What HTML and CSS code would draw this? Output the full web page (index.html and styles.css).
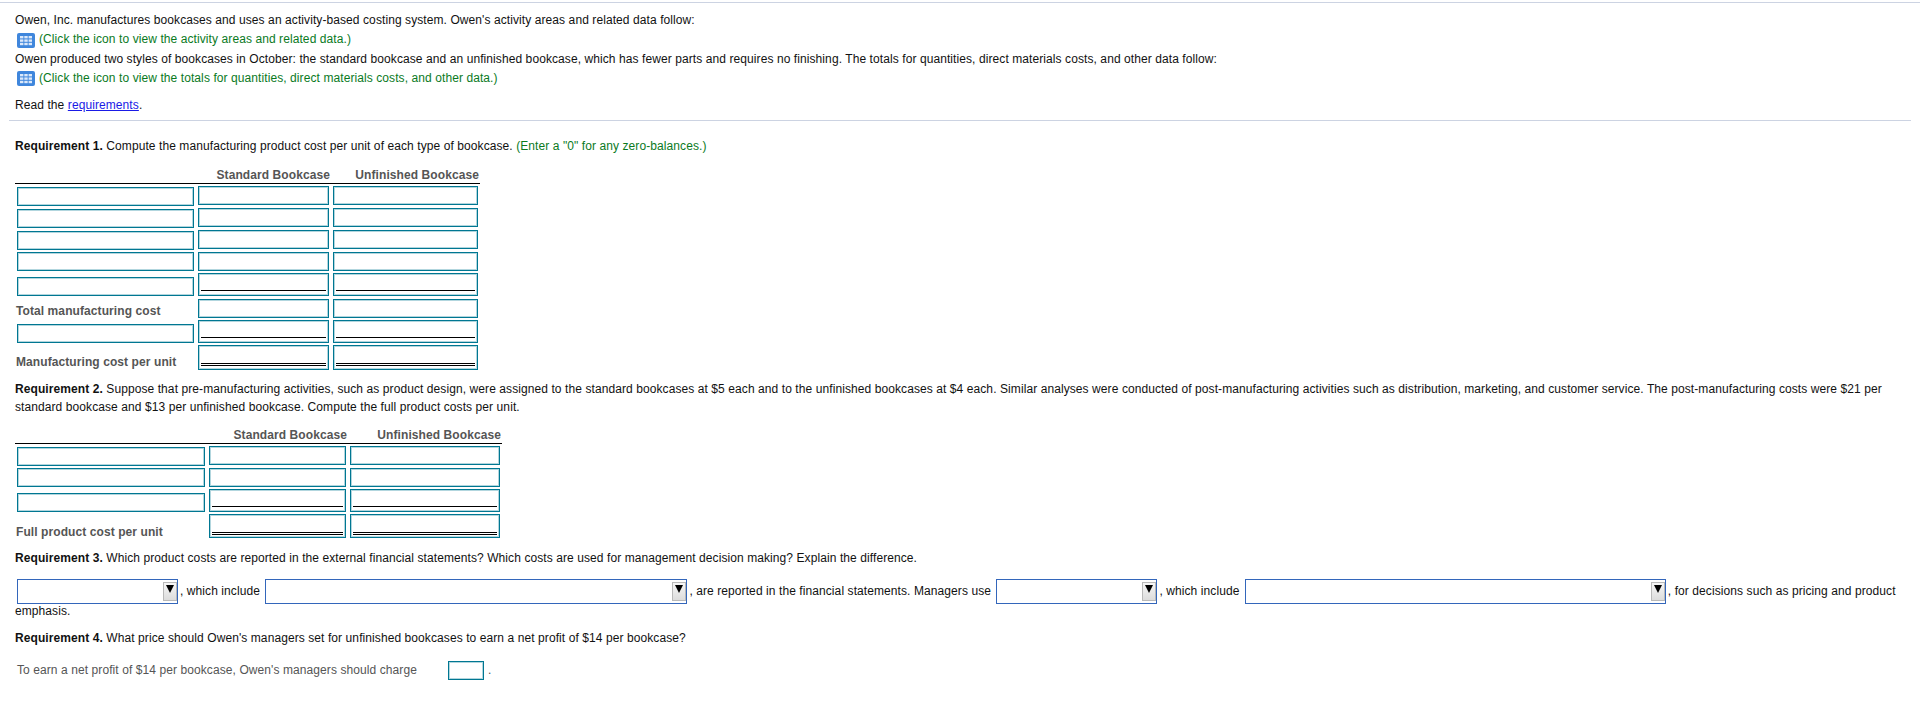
FILE: index.html
```html
<!DOCTYPE html>
<html lang="en">
<head>
<meta charset="utf-8">
<title>Owen, Inc. activity-based costing</title>
<link rel="stylesheet" href="styles.css">
</head>
<body>
<div class="top-rule"></div>
<section class="intro">
  <p class="line">Owen, Inc. manufactures bookcases and uses an activity-based costing system. Owen's activity areas and related data follow:</p>
  <p class="line note"><svg class="grid-icon" viewBox="0 0 18 15"><rect width="18" height="15" rx="2" fill="#3f86dc"/><g fill="#dbe8fa"><rect x="3" y="3" width="3.4" height="2.4"/><rect x="7.3" y="3" width="3.4" height="2.4"/><rect x="11.6" y="3" width="3.4" height="2.4"/><rect x="3" y="6.4" width="3.4" height="2.4"/><rect x="7.3" y="6.4" width="3.4" height="2.4"/><rect x="11.6" y="6.4" width="3.4" height="2.4"/><rect x="3" y="9.8" width="3.4" height="2.4"/><rect x="7.3" y="9.8" width="3.4" height="2.4"/><rect x="11.6" y="9.8" width="3.4" height="2.4"/></g></svg>(Click the icon to view the activity areas and related data.)</p>
  <p class="line">Owen produced two styles of bookcases in October: the standard bookcase and an unfinished bookcase, which has fewer parts and requires no finishing. The totals for quantities, direct materials costs, and other data follow:</p>
  <p class="line note"><svg class="grid-icon" viewBox="0 0 18 15"><rect width="18" height="15" rx="2" fill="#3f86dc"/><g fill="#dbe8fa"><rect x="3" y="3" width="3.4" height="2.4"/><rect x="7.3" y="3" width="3.4" height="2.4"/><rect x="11.6" y="3" width="3.4" height="2.4"/><rect x="3" y="6.4" width="3.4" height="2.4"/><rect x="7.3" y="6.4" width="3.4" height="2.4"/><rect x="11.6" y="6.4" width="3.4" height="2.4"/><rect x="3" y="9.8" width="3.4" height="2.4"/><rect x="7.3" y="9.8" width="3.4" height="2.4"/><rect x="11.6" y="9.8" width="3.4" height="2.4"/></g></svg>(Click the icon to view the totals for quantities, direct materials costs, and other data.)</p>
  <p class="line read">Read the <a href="#req">requirements</a>.</p>
</section>
<hr class="rule">
<main class="content">
  <p class="req req1"><b>Requirement 1.</b> Compute the manufacturing product cost per unit of each type of bookcase. <span class="hint">(Enter a "0" for any zero-balances.)</span></p>

  <div class="sheet sheet1">
    <div class="head first">Standard Bookcase</div><div class="head second">Unfinished Bookcase</div>
    <div class="cell label"><input class="field"></div><div class="cell"><input class="field"></div><div class="cell"><input class="field"></div>
    <div class="cell label"><input class="field"></div><div class="cell"><input class="field"></div><div class="cell"><input class="field"></div>
    <div class="cell label"><input class="field"></div><div class="cell"><input class="field"></div><div class="cell"><input class="field"></div>
    <div class="cell label"><input class="field"></div><div class="cell"><input class="field"></div><div class="cell"><input class="field"></div>
    <div class="cell label raised"><input class="field"></div><div class="cell"><div class="ruled single"></div></div><div class="cell"><div class="ruled single"></div></div>
    <div class="cell label"><span class="caption total">Total manufacturing cost</span></div><div class="cell"><input class="field"></div><div class="cell"><input class="field"></div>
    <div class="cell label"><input class="field"></div><div class="cell"><div class="ruled single"></div></div><div class="cell"><div class="ruled single"></div></div>
    <div class="cell label"><span class="caption">Manufacturing cost per unit</span></div><div class="cell"><div class="ruled double"></div></div><div class="cell"><div class="ruled double"></div></div>
  </div>

  <p class="req req2"><b>Requirement 2.</b> Suppose that pre-manufacturing activities, such as product design, were assigned to the standard bookcases at $5 each and to the unfinished bookcases at $4 each. Similar analyses were conducted of post-manufacturing activities such as distribution, marketing, and customer service. The post-manufacturing costs were $21 per standard bookcase and $13 per unfinished bookcase. Compute the full product costs per unit.</p>

  <div class="sheet sheet2">
    <div class="head first">Standard Bookcase</div><div class="head second">Unfinished Bookcase</div>
    <div class="cell label"><input class="field"></div><div class="cell"><input class="field"></div><div class="cell"><input class="field"></div>
    <div class="cell label"><input class="field"></div><div class="cell"><input class="field"></div><div class="cell"><input class="field"></div>
    <div class="cell label"><input class="field"></div><div class="cell"><div class="ruled single"></div></div><div class="cell"><div class="ruled single"></div></div>
    <div class="cell label"><span class="caption low">Full product cost per unit</span></div><div class="cell"><div class="ruled double"></div></div><div class="cell"><div class="ruled double"></div></div>
  </div>

  <p class="req req3"><b>Requirement 3.</b> Which product costs are reported in the external financial statements? Which costs are used for management decision making? Explain the difference.</p>

  <p class="sentence"><span class="drop w1"><span class="arrow"><svg viewBox="0 0 9 9"><path d="M0 0H9L4.5 9Z"/></svg></span></span>, which include <span class="drop w2"><span class="arrow"><svg viewBox="0 0 9 9"><path d="M0 0H9L4.5 9Z"/></svg></span></span>, are reported in the financial statements. Managers use <span class="drop w3"><span class="arrow"><svg viewBox="0 0 9 9"><path d="M0 0H9L4.5 9Z"/></svg></span></span>, which include <span class="drop w4"><span class="arrow"><svg viewBox="0 0 9 9"><path d="M0 0H9L4.5 9Z"/></svg></span></span>, for decisions such as pricing and product emphasis.</p>

  <p class="req req4"><b>Requirement 4.</b> What price should Owen's managers set for unfinished bookcases to earn a net profit of $14 per bookcase?</p>

  <div class="answer"><span class="answer-text">To earn a net profit of $14 per bookcase, Owen's managers should charge</span><input class="field price"><span class="dot">.</span></div>
</main>
</body>
</html>
```
FILE: styles.css
```css
* { box-sizing: border-box; }
html, body { margin: 0; padding: 0; background: #fff; }
body { font-family: "Liberation Sans", Arial, sans-serif; font-size: 12px; letter-spacing: 0.085px; color: #111; height: 714px; overflow: hidden; }
p { margin: 0; }
.top-rule { margin-top: 2px; height: 1px; background: #ccd3e2; }
.intro { padding: 8px 15px 0; }
.line { height: 19.4px; line-height: 19.4px; display: flex; align-items: center; white-space: nowrap; }
.note { color: #0a7a1e; }
.grid-icon { width: 18px; height: 15px; margin: 0 4px 0 2px; flex: none; }
.read { margin-top: 7px; display: block; }
.read a { color: #1a1ae6; text-decoration: underline; }
.rule { margin: 5px 9px 0 9px; border: 0; height: 1px; background: #ccd3e2; }
.content { padding: 0 10px 0 15px; }
.req { line-height: 17px; }
.req1 { margin-top: 17px; }
.hint { color: #0a7a1e; }
.sheet { display: grid; column-gap: 4px; row-gap: 2px; margin-top: 11px; padding-left: 2px; background: linear-gradient(#000, #000) 0 17px / 100% 1px no-repeat; }
.sheet::before { content: ""; grid-row: 1; grid-column: 1; }
.sheet1 { width: 465px; grid-template-columns: 177px 131px 145px; grid-template-rows: 18px 20px 20px 20px 19px 24px 19px 23px 25px; }
.sheet2 { width: 487px; margin-top: 10px; grid-template-columns: 188px 137px 150px; grid-template-rows: 18px 20px 19px 23px 24px; }
.head { grid-row: 1; font-weight: bold; color: #555; text-align: right; line-height: 18px; margin-right: -1px; white-space: nowrap; }
.head.first { grid-column: 2; }
.head.second { grid-column: 3; }
.cell { display: flex; flex-direction: column; justify-content: flex-start; }
.cell.label { justify-content: flex-end; }
.cell.raised { padding-bottom: 1px; }
.field { display: block; width: 100%; height: 19px; padding: 0; border: 1px solid #007792; box-shadow: inset 0 0 0 1px rgba(0, 119, 146, .3); border-radius: 0; background: #fff; outline: 0; flex: none; }
.ruled { border: 1px solid #007792; box-shadow: inset 0 0 0 1px rgba(0, 119, 146, .3); padding: 0 2px 4px; display: flex; flex-direction: column; justify-content: flex-end; }
.ruled::after { content: ""; display: block; }
.single { height: 23px; }
.double { height: 25px; padding-bottom: 3px; }
.sheet2 .double { height: 24px; padding-bottom: 2px; }
.single::after { border-bottom: 1px solid #000; }
.double::after { border-bottom: 3px double #000; }
.caption { font-weight: bold; color: #555; margin-left: -1px; line-height: 16px; white-space: nowrap; }
.caption.total { margin-bottom: -1px; }
.caption.low { margin-bottom: -2px; }
.req2 { margin-top: 10px; line-height: 18px; }
.req3 { margin-top: 12px; }
.sentence { margin-top: 12px; line-height: 14px; }
.drop { display: inline-flex; justify-content: flex-end; align-items: flex-start; height: 25px; border: 1px solid #3366bb; background: #fff; vertical-align: middle; margin: 0 2px; padding-top: 2px; }
.w1 { width: 161px; }
.w2 { width: 422px; }
.w3 { width: 161px; }
.w4 { width: 421px; }
.arrow { width: 14px; height: 19px; background: linear-gradient(#f6f6f6, #dcdcdc); border: 1px solid #b9b9b9; display: flex; align-items: flex-start; justify-content: center; padding-top: 2px; }
.arrow svg { width: 8px; height: 8px; fill: #000; }
.req4 { margin-top: 12px; }
.answer { display: flex; align-items: center; margin-top: 14px; color: #555; padding-left: 2px; }
.answer-text { width: 431px; }
.price { width: 36px; }
.dot { margin-left: 4px; }
```
